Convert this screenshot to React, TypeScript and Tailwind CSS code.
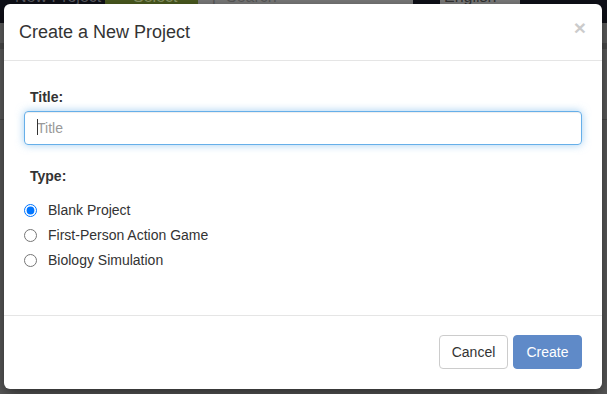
import React from "react";

export default function App() {
  const font = { fontFamily: '"Liberation Sans", Arial, Helvetica, sans-serif' };
  return (
    <div className="relative w-[607px] h-[394px] overflow-hidden bg-[#5a5a5a]" style={font}>
      {/* dimmed page behind the modal */}
      <div className="flex h-[23px] bg-[#0f1018] text-[16px] leading-[16px] text-[#5c5c62] overflow-hidden">
        <div className="w-[105px] pl-[15px] -mt-[11px]">New Project</div>
        <div className="w-[93px] bg-[#4a5a1f] pl-[28px] -mt-[11px] text-[#8a9566]">Select</div>
        <div className="w-[215px] bg-[#7a7a7a] flex items-start pl-[10px] -mt-[11px] text-[#5a5a5a]">
          <span className="mr-[6px]">⚲</span>Search
        </div>
        <div className="w-[27px]" />
        <div className="w-[80px] bg-[#7c7c7c] pl-[4px] -mt-[11px] text-[#333]">English (en)</div>
        <div className="flex-1" />
      </div>
      <div className="h-[20px] bg-[#606060]" />
      <div className="h-[6px] bg-[#4d4d4d]" />
      <div className="h-[70px] bg-[#5d5d5d]" />
      <div className="h-[1px] bg-[#4a4a4a]" />

      {/* modal */}
      <div className="absolute left-[4px] top-[4px] w-[598px] h-[385px] bg-white rounded-[6px] shadow-[0_5px_15px_rgba(0,0,0,0.5)] flex flex-col text-[#333]">
        <div className="h-[56px] flex items-center justify-between pl-[15px] pr-[16px] border-b border-[#e5e5e5] box-content">
          <div className="text-[18px] leading-[26px] text-[#333]">Create a New Project</div>
          <div className="text-[21px] font-bold leading-[21px] text-black opacity-20 -mt-[9px]">×</div>
        </div>
        <div className="flex-1 px-[20px] pt-[26px]">
          <div className="text-[14px] leading-[20px] font-bold pl-[6px] mb-[4px]">Title:</div>
          <div className="relative">
            <input
              type="text"
              placeholder="Title"
              className="block w-full h-[34px] rounded-[4px] border border-[#66afe9] px-[12px] text-[14px] text-[#555] placeholder:text-[#999] outline-none shadow-[inset_0_1px_1px_rgba(0,0,0,0.075),0_0_8px_rgba(102,175,233,0.6)]"
              style={font}
            />
            <span className="absolute left-[13px] top-[8px] w-[1px] h-[16px] bg-[#333]" />
          </div>
          <div className="text-[14px] leading-[20px] font-bold pl-[6px] mt-[21px]">Type:</div>
          <div className="mt-[14px] flex flex-col gap-[5px] text-[14px] leading-[20px]">
            {["Blank Project", "First-Person Action Game", "Biology Simulation"].map((t, i) => (
              <label key={t} className="flex items-center h-[20px]">
                <input type="radio" name="type" defaultChecked={i === 0} className="m-0 w-[13px] h-[13px]" />
                <span className="ml-[11px]">{t}</span>
              </label>
            ))}
          </div>
        </div>
        <div className="h-[74px] border-t border-[#e5e5e5] flex justify-end items-start pt-[19px] pr-[20px] gap-[5px]">
          <button className="w-[69px] h-[34px] rounded-[4px] border border-[#ccc] bg-white text-[14px] text-[#333]" style={font}>
            Cancel
          </button>
          <button className="w-[69px] h-[34px] rounded-[4px] border border-[#5f8ac8] bg-[#5f8ac8] text-[14px] text-white" style={font}>
            Create
          </button>
        </div>
      </div>
    </div>
  );
}
